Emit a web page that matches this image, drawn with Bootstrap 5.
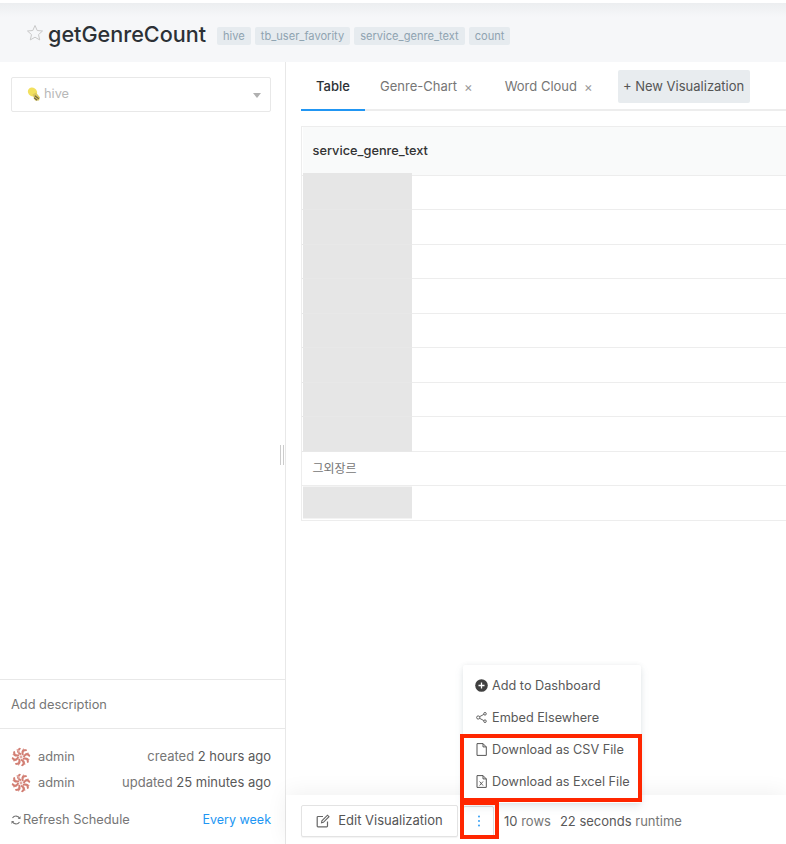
<!DOCTYPE html>
<html lang="en">
<head>
<meta charset="utf-8">
<title>getGenreCount</title>
<link href="https://cdn.jsdelivr.net/npm/bootstrap@5.3.0/dist/css/bootstrap.min.css" rel="stylesheet">
<style>
html,body{height:844px;overflow:hidden;background:#fff;}
body{font-family:Inter,"Noto Sans CJK KR",sans-serif;font-size:12.8px;color:#767676;}
.page-shell{height:844px;display:flex;flex-direction:column;background:#fff;}
.top-strip{height:3px;flex:none;background:#fff;}
.q-head{height:59px;flex:none;background:linear-gradient(#eceef0,#f6f7f9 14px);padding:3px 0 0 26px;display:flex;align-items:center;gap:4px;}
.q-title{font-size:21.6px;font-weight:500;color:#2c3136;line-height:30px;margin:0;}
.q-star{margin-bottom:3px;}
.q-tag{background:#e6ebef;color:#8fa3b1;font-size:11.1px;height:18px;line-height:18px;padding:0 6px;border-radius:2px;margin-top:4px;white-space:nowrap;}
.q-tag-first{margin-left:7px;}
.q-body{flex:1;display:flex;min-height:0;position:relative;}
.q-side{width:286px;flex:none;border-right:1px solid #e8e8e8;display:flex;flex-direction:column;}
.ds-select{margin:15px 14px 0 11px;height:35px;border:1px solid #e8e8e8;border-radius:2px;padding:0 15px 2px;color:#b8b8b8;display:flex;align-items:center;gap:3px;}
.ds-caret{margin-left:auto;margin-right:-6px;margin-top:3px;width:0;height:0;border:4px solid transparent;border-top:5px solid #b0b0b0;border-bottom:0;}
.side-desc{margin-top:auto;border-top:1px solid #e8e8e8;border-bottom:1px solid #e8e8e8;height:50px;padding:2px 0 0 11px;display:flex;align-items:center;color:#767676;}
.side-people{padding:15px 14px 0 11px;height:115px;}
.person{height:26px;display:flex;align-items:center;gap:7px;color:#767676;}
.person-when{margin-left:auto;font-size:13px;}
.sched{margin-top:14px;display:flex;align-items:center;color:#767676;height:20px;}
.sched-ico{margin-right:2px;}
.sched-link{margin-left:auto;color:#2196f3;text-decoration:none;font-size:12.5px;}
.q-main{flex:1;min-width:0;padding-left:15px;display:flex;flex-direction:column;position:relative;overflow:hidden;}
.viz-tabs{height:49px;border-bottom:2px solid #ededed;display:flex;align-items:flex-end;flex:none;}
.viz-tab{height:49px;display:flex;align-items:center;color:#767676;margin-bottom:-2px;border-bottom:2px solid transparent;padding-top:3px;font-size:13px;}
.viz-active{color:#2c3136;font-weight:500;border-bottom-color:#2196f3;width:64px;justify-content:center;}
.viz-gap-one{margin-left:15px;}
.viz-gap-two{margin-left:32px;}
.viz-x{color:#999;font-size:13px;margin-left:7px;line-height:1;}
.viz-new{background:#e8ecef;color:#555;border:0;border-radius:2px;height:33px;width:132px;padding:0;font-size:13px;margin:0 0 6px 25px;align-self:flex-end;}
.grid-wrap{margin-top:15px;border:1px solid #ededed;border-right:0;width:500px;flex:none;}
.grid-table{width:100%;margin:0;border-collapse:collapse;table-layout:fixed;}
.grid-table th{height:48px;background:#f9fafa;font-weight:500;color:#333;padding:0 0 0 10px;border-bottom:1px solid #ededed;font-size:12.8px;white-space:nowrap;}
.grid-table td{height:34.5px;padding:0;border-bottom:1px solid #ededed;color:#767676;font-size:12px;}
.grid-table tr:last-child td{border-bottom:0;}
.cell-name{width:109px;}
.grid-table td.redact-cell{background:#e6e6e6;border-left:1px solid #fff;border-bottom-color:#e8e8e8;position:relative;}
.grid-table tr:last-child td.redact-cell{background:linear-gradient(#e6e6e6 32px,#fff 32px);}
.redact-lip{display:block;position:absolute;left:0;right:0;top:-3px;height:3px;background:#e6e6e6;}
.cell-text{padding:1px 0 0 10px!important;}
.resizer{position:absolute;left:280px;top:383px;width:4px;height:20px;border-left:1px solid #ccc;border-right:1px solid #ccc;}
.foot-bar{position:absolute;left:286px;right:0;bottom:0;height:49px;background:#fff;box-shadow:0 -3px 22px rgba(0,0,0,.06);display:flex;align-items:center;padding:3px 0 0 15px;z-index:3;}
.edit-btn{height:32px;width:157px;background:#fff;border:1px solid #e3e3e3;border-radius:2px;color:#555;font-size:13px;padding:0;display:flex;align-items:center;justify-content:center;gap:8px;box-shadow:0 1px 1px rgba(0,0,0,.05);}
.more-wrap{position:relative;margin-left:5px;}
.more-btn{width:31px;height:31px;background:#fff;border:1px solid #ddd;border-radius:2px;padding:0;display:flex;align-items:center;justify-content:center;}
.more-menu{display:block;position:absolute;left:0;bottom:34px;width:178px;min-width:0;margin:0;padding:5px 0;border:0;border-radius:2px;background:#fff;box-shadow:0 4px 9px rgba(102,136,153,.15),0 0 5px rgba(0,0,0,.06);}
.more-item{display:flex;align-items:center;height:32px;padding:0 12px;color:#595959;font-size:12.7px;gap:4px;text-decoration:none;white-space:nowrap;}
.item-ico{width:13px;display:inline-flex;justify-content:center;flex:none;}
.foot-stats{margin-left:10px;padding-top:2px;color:#767676;display:flex;gap:9px;white-space:nowrap;font-size:13px;}
.stat-num{color:#595959;}
.note-box{position:absolute;border:4px solid #ff2600;z-index:5;pointer-events:none;}
.note-menu{left:460px;top:734px;width:182px;height:68px;}
.note-btn{left:460px;top:801px;width:39px;height:38px;}
</style>
</head>
<body>
<svg width="0" height="0" class="d-none" aria-hidden="true"><defs>
  <g id="blade"><path d="M10 7.500C8.500 6 7 6 7 4.200 7 2.800 8.500 2.500 9 1" fill="none" stroke="#d27f74" stroke-width="2"/><path d="M11.500 5.500C13 4.500 13 3 12 1.800" fill="none" stroke="#e0a9a2" stroke-width="1.600"/></g>
  <g id="identicon"><use href="#blade"/><use href="#blade" transform="rotate(45 10 10)"/><use href="#blade" transform="rotate(90 10 10)"/><use href="#blade" transform="rotate(135 10 10)"/><use href="#blade" transform="rotate(180 10 10)"/><use href="#blade" transform="rotate(225 10 10)"/><use href="#blade" transform="rotate(270 10 10)"/><use href="#blade" transform="rotate(315 10 10)"/><circle cx="10" cy="10" r="1.400" fill="#e0a9a2"/></g>
</defs></svg>
<div class="page-shell">
  <div class="top-strip"></div>
  <header class="q-head">
    <svg width="18" height="18" viewBox="0 0 18 18" class="q-star" aria-hidden="true"><path d="M9 1.500l2.200 5 5.300.5-4 3.600 1.200 5.300L9 13.200l-4.700 2.700 1.200-5.300-4-3.600 5.300-.5z" fill="none" stroke="#c9c9c9" stroke-width="1"/></svg>
    <h3 class="q-title">getGenreCount</h3>
    <span class="q-tag q-tag-first">hive</span>
    <span class="q-tag">tb_user_favority</span>
    <span class="q-tag">service_genre_text</span>
    <span class="q-tag">count</span>
  </header>
  <div class="q-body">
    <aside class="q-side">
      <div class="ds-select">
        <svg width="14" height="14" viewBox="0 0 14 14" aria-hidden="true"><ellipse cx="5.500" cy="5" rx="4.800" ry="4.200" transform="rotate(35 5.500 5)" fill="#f2e05f"/><path d="M5.500 7.500L9 5.500l4 5-1 3H8z" fill="#dcc95f"/><path d="M7.800 8.800l4 3M7 10.800l3.200 2.400" stroke="#6f6440" stroke-width="1.100"/></svg>
        <span>hive</span>
        <span class="ds-caret"></span>
      </div>
      <div class="side-desc">Add description</div>
      <div class="side-people">
        <div class="person">
          <svg width="20" height="20" viewBox="0 0 20 20" aria-hidden="true"><use href="#identicon"/></svg>
          <span>admin</span><span class="person-when">created <span class="stat-num">2 hours ago</span></span>
        </div>
        <div class="person">
          <svg width="20" height="20" viewBox="0 0 20 20" aria-hidden="true"><use href="#identicon"/></svg>
          <span>admin</span><span class="person-when">updated <span class="stat-num">25 minutes ago</span></span>
        </div>
        <div class="sched">
          <svg width="10" height="10" viewBox="0 0 10 10" class="sched-ico" aria-hidden="true"><path d="M8.600 3.500A4 4 0 0 0 1.500 3M1.400 6.500A4 4 0 0 0 8.500 7" fill="none" stroke="#767676" stroke-width="1.100"/><path d="M9.500 1v3H6.800zM.5 9V6h2.700z" fill="#767676"/></svg>
          <span>Refresh Schedule</span>
          <a class="sched-link" href="#">Every week</a>
        </div>
      </div>
    </aside>
    <main class="q-main">
      <nav class="viz-tabs">
        <div class="viz-tab viz-active">Table</div>
        <div class="viz-tab viz-gap-one">Genre-Chart<span class="viz-x">×</span></div>
        <div class="viz-tab viz-gap-two">Word Cloud<span class="viz-x">×</span></div>
        <button type="button" class="btn viz-new">+ New Visualization</button>
      </nav>
      <div class="grid-wrap">
        <table class="grid-table">
          <thead><tr><th class="cell-name">service_genre_text</th><th></th></tr></thead>
          <tbody>
            <tr><td class="cell-name redact-cell"><span class="redact-lip"></span></td><td></td></tr>
            <tr><td class="cell-name redact-cell"></td><td></td></tr>
            <tr><td class="cell-name redact-cell"></td><td></td></tr>
            <tr><td class="cell-name redact-cell"></td><td></td></tr>
            <tr><td class="cell-name redact-cell"></td><td></td></tr>
            <tr><td class="cell-name redact-cell"></td><td></td></tr>
            <tr><td class="cell-name redact-cell"></td><td></td></tr>
            <tr><td class="cell-name redact-cell"></td><td></td></tr>
            <tr><td class="cell-name cell-text">그외장르</td><td></td></tr>
            <tr><td class="cell-name redact-cell"></td><td></td></tr>
          </tbody>
        </table>
      </div>
    </main>
    <div class="resizer"></div>
  </div>
</div>
<div class="foot-bar">
  <button type="button" class="btn edit-btn">
    <svg width="14" height="14" viewBox="0 0 14 14" aria-hidden="true"><path d="M11.500 7.500v4.500a.8.8 0 0 1-.8.8H2a.8.8 0 0 1-.8-.8V3.300A.8.8 0 0 1 2 2.500h5" fill="none" stroke="#666" stroke-width="1.200"/><path d="M5.500 8.800l.4-2L11.500 1.200l1.500 1.500L7.400 8.300z" fill="none" stroke="#666" stroke-width="1.100"/></svg>
    Edit Visualization
  </button>
  <div class="more-wrap">
    <button type="button" class="btn more-btn" aria-label="More">
      <svg width="4" height="12" viewBox="0 0 4 12" aria-hidden="true"><circle cx="2" cy="1.500" r=".9" fill="#2196f3"/><circle cx="2" cy="6" r=".9" fill="#2196f3"/><circle cx="2" cy="10.500" r=".9" fill="#2196f3"/></svg>
    </button>
    <div class="dropdown-menu more-menu">
      <a class="more-item" href="#"><span class="item-ico"><svg width="13" height="13" viewBox="0 0 13 13" aria-hidden="true"><circle cx="6.500" cy="6.500" r="6.300" fill="#404040"/><path d="M6.500 3.500v6M3.500 6.500h6" stroke="#fff" stroke-width="1.300"/></svg></span>Add to Dashboard</a>
      <a class="more-item" href="#"><span class="item-ico"><svg width="11" height="11" viewBox="0 0 11 11" aria-hidden="true"><g fill="none" stroke="#555" stroke-width=".9"><circle cx="2.200" cy="5.500" r="1.600"/><circle cx="9" cy="1.800" r="1.300"/><circle cx="9" cy="9.200" r="1.300"/><path d="M3.600 4.700l4.200-2.300M3.600 6.300l4.200 2.300"/></g></svg></span>Embed Elsewhere</a>
      <a class="more-item" href="#"><span class="item-ico"><svg width="11" height="13" viewBox="0 0 11 13" aria-hidden="true"><path d="M1 .6h6l3.300 3.300v8.500H1zM7 .6v3.300h3.300" fill="none" stroke="#555" stroke-width="1"/></svg></span>Download as CSV File</a>
      <a class="more-item" href="#"><span class="item-ico"><svg width="11" height="13" viewBox="0 0 11 13" aria-hidden="true"><path d="M1 .6h6l3.300 3.300v8.500H1zM7 .6v3.300h3.300" fill="none" stroke="#555" stroke-width="1"/><path d="M3.600 6.500l3.400 4M7 6.500l-3.400 4" stroke="#555" stroke-width=".9"/></svg></span>Download as Excel File</a>
    </div>
  </div>
  <div class="foot-stats"><span><span class="stat-num">10</span> rows</span><span><span class="stat-num">22 seconds</span> runtime</span></div>
</div>
<div class="note-box note-menu"></div>
<div class="note-box note-btn"></div>
<script src="https://cdn.jsdelivr.net/npm/bootstrap@5.3.0/dist/js/bootstrap.bundle.min.js"></script>
</body>
</html>
